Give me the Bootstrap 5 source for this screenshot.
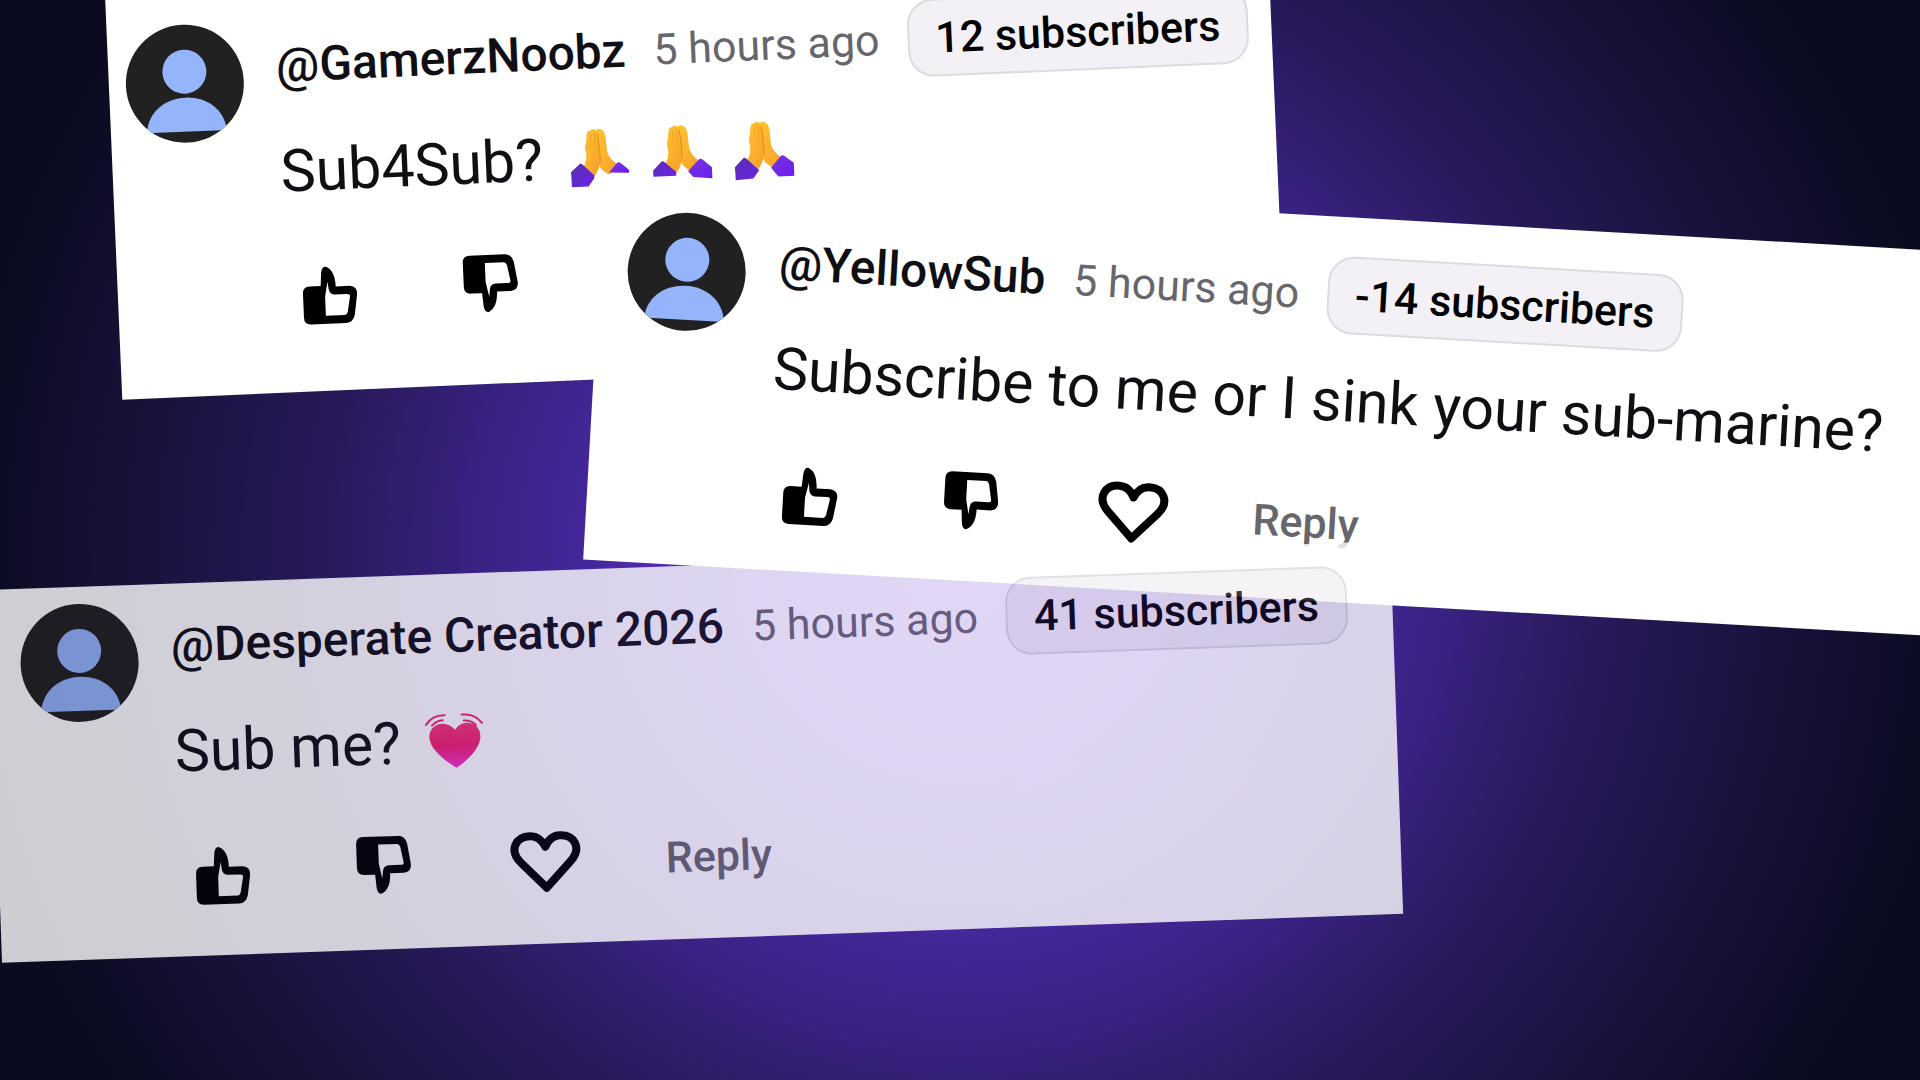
<!DOCTYPE html>
<html lang="en">
<head>
<meta charset="utf-8">
<meta name="viewport" content="width=device-width, initial-scale=1">
<title>Comments</title>
<link href="https://cdn.jsdelivr.net/npm/bootstrap@5.3.0/dist/css/bootstrap.min.css" rel="stylesheet">
<style>
  body { font-family: Roboto, "Liberation Sans", sans-serif; background: #0a0a22; }
  .stage { background: radial-gradient(ellipse 53% 92% at 50% 52%, #6c38d4 0%, #532db4 26%, #44279a 37%, #38217f 49%, #2a1a5e 61%, #1f1548 73%, #151034 85%, #0c0c24 95%, #0a0b1e 100%); }
  .note { background: #fff; color: #0f0f14; transform-origin: 0 0; }
  .note-noobz { left: 105px; top: -5px; width: 60.6%; padding: 32px 16px 58px; transform: rotate(-2.45deg); }
  .note-yellow { left: 605px; top: 175px; width: 75%; padding: 32px 27px 38px; transform: rotate(3.25deg); }
  .note-creator { left: -11px; top: 590px; width: 73%; padding: 16px 28px 42px; transform: rotate(-2deg); opacity: .8; }
  .note-layout { gap: 32px; }
  .avatar { width: 120px; height: 120px; }
  .note-body { padding-top: 7px; }
  .note-head { height: 78px; gap: 28px; }
  .author { font-size: 48px; line-height: 60px; font-weight: 500; color: #0f0f14; }
  .when { font-size: 43px; line-height: 60px; color: #66666c; }
  .subs { height: 78px; padding: 0 26px; font-size: 43px; line-height: 60px; font-weight: 500; color: #000; background: #f3f1f5; border: 2px solid #dddae0; border-radius: 26px; }
  .message { margin: 27px 0 43px; font-size: 59px; line-height: 80px; }
  .emoji { width: 60px; height: 60px; }
  .emoji-row { gap: 22px; }
  .actions { gap: 81px; }
  .act-icon { width: 80px; height: 80px; display: block; }
  .reply { font-size: 43px; line-height: 60px; font-weight: 500; color: #66666c; }
</style>
</head>
<body>
<svg class="position-absolute" width="0" height="0" aria-hidden="true">
  <defs>
    <clipPath id="face"><circle cx="60" cy="60" r="59"/></clipPath>
    <linearGradient id="skin" x1="0" y1="0" x2="1" y2="1"><stop offset="0" stop-color="#ffc62e"/><stop offset="1" stop-color="#f79c2c"/></linearGradient>
    <linearGradient id="cuff" x1="0" y1="0" x2="1" y2="1"><stop offset="0" stop-color="#5a30ac"/><stop offset="1" stop-color="#6a22ea"/></linearGradient>
    <linearGradient id="cuff-light" x1="0" y1="0" x2="1" y2="1"><stop offset="0" stop-color="#7a35d8"/><stop offset="1" stop-color="#6a1cf4"/></linearGradient>
    <linearGradient id="love" x1="0" y1="0" x2="0" y2="1"><stop offset="0" stop-color="#f63472"/><stop offset=".5" stop-color="#f0206e"/><stop offset="1" stop-color="#fa30cc"/></linearGradient>
  </defs>
  <symbol id="person" viewBox="0 0 120 120">
    <circle cx="60" cy="60" r="59" fill="#212121"/>
    <g clip-path="url(#face)" fill="#94b5fb"><circle cx="60" cy="48" r="22"/><path d="M20 108C22 86 40 74 60 74S98 86 100 108Z"/></g>
  </symbol>
  <symbol id="thumb" viewBox="0 0 80 80">
    <path fill-rule="evenodd" d="M20 33H31L32 20Q33 13 37 14 46 18 46 34H60Q68 35 67 43L64 63Q62 71 55 71H20Q13 71 13 64V40Q13 33 20 33ZM38 29 35 44V63H54Q56 63 57 60L60 44Q60 42 57 42H45Q40 42 39 37Z"/>
  </symbol>
  <symbol id="love-line" viewBox="0 0 80 80">
    <path d="M41 66 16 40C4 27 12 14 26 14q10 0 15 11 5-11 15-11c14 0 22 13 10 26Z" fill="none" stroke="#000" stroke-width="8" stroke-linejoin="round"/>
  </symbol>
  <symbol id="hands" viewBox="0 0 60 60">
    <path d="M26 4Q27 0 31 1 35 2 36 9L37 24Q39 32 48 38L38 47Q29 42 28 36Z" fill="url(#skin)"/>
    <path d="M17 8Q17 2 21 2 25-1 28 4 30 16 30 30 29 42 22 50L11 41Q17 33 16 24 14 19 16 15Z" fill="url(#skin)"/>
    <path d="M28 6q2 14 2 27" fill="none" stroke="#d9851c" stroke-opacity=".8"/>
    <path d="M21 6v12M25 5v13" fill="none" stroke="#e0921c" stroke-opacity=".4"/>
  </symbol>
  <symbol id="pray-a" viewBox="0 0 60 60">
    <use href="#hands"/>
    <path d="M0 43 8 36Q10 34 12 36L23 47V50L17 58H0Z" fill="url(#cuff)"/>
    <path d="M38 45 46 36Q48 34 50 36L58 43V46Z" fill="url(#cuff-light)"/>
  </symbol>
  <symbol id="pray-b" viewBox="0 0 60 60">
    <use href="#hands"/>
    <path d="M0 45 8 37Q10 35 12 37L23 47V51H0Z" fill="url(#cuff)"/>
    <path d="M35 47 46 36Q48 34 50 36L59 44V55L40 53Z" fill="url(#cuff-light)"/>
  </symbol>
  <symbol id="pray-c" viewBox="0 0 60 60">
    <use href="#hands"/>
    <path d="M0 45 8 37Q10 35 12 37L24 49 18 57 0 58Z" fill="url(#cuff)"/>
    <path d="M36 47 46 36Q48 34 50 36L59 43V56H43Z" fill="url(#cuff-light)"/>
  </symbol>
  <symbol id="beat" viewBox="0 0 60 60">
    <path d="M31 56C19 48 5 36 5 25 5 10 23 7 31 18c7-11 25-8 25 7 0 11-13 24-25 31Z" fill="url(#love)"/>
    <path d="M2 12Q9 2 21 3M8 13q5-5 11-5M38 3q13-1 20 9M40 9q8 0 12 5" fill="none" stroke="#ec2a70" stroke-width="2" stroke-linecap="round"/>
  </symbol>
</svg>

<main class="stage position-relative overflow-hidden vh-100">

  <article class="note note-noobz position-absolute">
    <div class="note-layout d-flex align-items-start">
      <svg class="avatar flex-shrink-0" aria-hidden="true"><use href="#person"/></svg>
      <div class="note-body">
        <header class="note-head d-flex align-items-center text-nowrap">
          <span class="author">@GamerzNoobz</span>
          <span class="when">5 hours ago</span>
          <span class="subs d-flex align-items-center">12 subscribers</span>
        </header>
        <p class="message d-flex align-items-center text-nowrap">Sub4Sub?
          <span class="d-flex emoji-row ms-4 ps-1">
            <svg class="emoji" role="img" aria-label="Folded hands"><use href="#pray-a"/></svg>
            <svg class="emoji" role="img" aria-label="Folded hands"><use href="#pray-b"/></svg>
            <svg class="emoji" role="img" aria-label="Folded hands"><use href="#pray-c"/></svg>
          </span>
        </p>
        <div class="actions d-flex align-items-center ms-1">
          <button class="btn p-0 border-0" type="button" aria-label="Like"><svg class="act-icon"><use href="#thumb"/></svg></button>
          <button class="btn p-0 border-0" type="button" aria-label="Dislike"><svg class="act-icon" viewBox="0 0 80 80"><use href="#thumb" transform="matrix(1 0 0 -1 0 80)"/></svg></button>
        </div>
      </div>
    </div>
  </article>

  <article class="note note-yellow position-absolute">
    <div class="note-layout d-flex align-items-start">
      <svg class="avatar flex-shrink-0" aria-hidden="true"><use href="#person"/></svg>
      <div class="note-body">
        <header class="note-head d-flex align-items-center text-nowrap">
          <span class="author">@YellowSub</span>
          <span class="when">5 hours ago</span>
          <span class="subs d-flex align-items-center">-14 subscribers</span>
        </header>
        <p class="message text-nowrap">Subscribe to me or I sink your sub-marine?</p>
        <div class="actions d-flex align-items-center ms-1">
          <button class="btn p-0 border-0" type="button" aria-label="Like"><svg class="act-icon"><use href="#thumb"/></svg></button>
          <button class="btn p-0 border-0" type="button" aria-label="Dislike"><svg class="act-icon" viewBox="0 0 80 80"><use href="#thumb" transform="matrix(1 0 0 -1 0 80)"/></svg></button>
          <button class="btn p-0 border-0" type="button" aria-label="Heart"><svg class="act-icon"><use href="#love-line"/></svg></button>
          <button class="btn p-0 border-0 reply" type="button">Reply</button>
        </div>
      </div>
    </div>
  </article>

  <article class="note note-creator position-absolute">
    <div class="note-layout d-flex align-items-start">
      <svg class="avatar flex-shrink-0" aria-hidden="true"><use href="#person"/></svg>
      <div class="note-body">
        <header class="note-head d-flex align-items-center text-nowrap">
          <span class="author">@Desperate Creator 2026</span>
          <span class="when">5 hours ago</span>
          <span class="subs d-flex align-items-center">41 subscribers</span>
        </header>
        <p class="message d-flex align-items-center text-nowrap">Sub me?
          <svg class="emoji ms-4" role="img" aria-label="Beating heart"><use href="#beat"/></svg>
        </p>
        <div class="actions d-flex align-items-center ms-1">
          <button class="btn p-0 border-0" type="button" aria-label="Like"><svg class="act-icon"><use href="#thumb"/></svg></button>
          <button class="btn p-0 border-0" type="button" aria-label="Dislike"><svg class="act-icon" viewBox="0 0 80 80"><use href="#thumb" transform="matrix(1 0 0 -1 0 80)"/></svg></button>
          <button class="btn p-0 border-0" type="button" aria-label="Heart"><svg class="act-icon"><use href="#love-line"/></svg></button>
          <button class="btn p-0 border-0 reply" type="button">Reply</button>
        </div>
      </div>
    </div>
  </article>

</main>
<script src="https://cdn.jsdelivr.net/npm/bootstrap@5.3.0/dist/js/bootstrap.bundle.min.js"></script>
</body>
</html>
